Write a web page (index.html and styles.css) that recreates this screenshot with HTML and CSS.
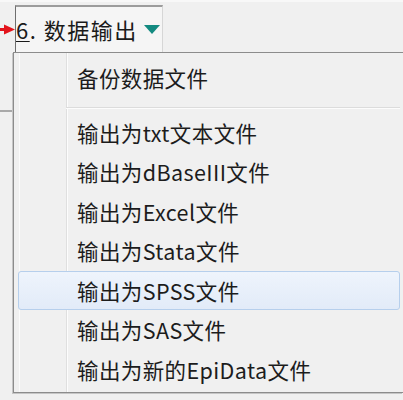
FILE: index.html
```html
<!DOCTYPE html>
<html lang="zh-CN">
<head>
<meta charset="utf-8">
<link rel="stylesheet" href="styles.css">
</head>
<body>
<div class="top">
  <div class="pointer">
    <svg class="arrow" width="15" height="11" viewBox="0 0 15 11"><path d="M0 4 L4 4 L4 0.5 L15 5.5 L4 10.5 L4 7 L0 7 Z" fill="#e2141c"/></svg>
  </div>
  <div class="dropbtn">
    <span class="btn-label"><u>6</u>. 数据输出</span>
    <svg class="caret" width="16" height="9" viewBox="0 0 16 9"><path d="M0 0 L16 0 L8 9 Z" fill="#138a80"/></svg>
  </div>
  <div class="top-rest"></div>
</div>
<div class="lower">
  <div class="side">
    <div class="side-line"></div>
  </div>
  <div class="menu">
    <div class="item">备份数据文件</div>
    <div class="sep"></div>
    <div class="item">输出为txt文本文件</div>
    <div class="item">输出为dBaseIII文件</div>
    <div class="item">输出为Excel文件</div>
    <div class="item">输出为Stata文件</div>
    <div class="item active">输出为SPSS文件</div>
    <div class="item">输出为SAS文件</div>
    <div class="item">输出为新的EpiData文件</div>
  </div>
</div>
</body>
</html>
```
FILE: styles.css
```css
html, body {
  margin: 0;
  padding: 0;
}
body {
  width: 403px;
  height: 400px;
  overflow: hidden;
  background: #f0f0f0;
  font-family: "Noto Sans CJK SC", "Noto Sans", sans-serif;
  color: #1e1e1e;
}
.top {
  display: flex;
  height: 52px;
  border-top: 2px solid #f8f8f8;
  box-sizing: border-box;
}
.pointer {
  width: 15px;
  padding-top: 22px;
  box-sizing: border-box;
}
.arrow {
  display: block;
}
.dropbtn {
  width: 148px;
  margin-top: 3px;
  box-sizing: border-box;
  border-top: 2px solid #9c9c9c;
  border-left: 1px solid #6e6e6e;
  border-right: 1px solid #d6d6d6;
  background: #f5f5f5;
  display: flex;
  align-items: center;
  padding-left: 0;
  padding-bottom: 2px;
}
.btn-label {
  font-size: 22px;
  letter-spacing: 1.5px;
  line-height: 30px;
  color: #1a1a1a;
}
.btn-label u {
  text-decoration-thickness: 1px;
  text-underline-offset: 2px;
}
.caret {
  margin-left: 6px;
  margin-top: 1px;
}
.top-rest {
  flex: 1;
}
.lower {
  display: flex;
  height: 341px;
}
.side {
  width: 15px;
  padding-top: 58px;
  box-sizing: border-box;
}
.side-line {
  height: 2px;
  background: #a9a9a9;
}
.menu {
  width: 390px;
  flex: none;
  box-sizing: border-box;
  border: 1px solid #8c8c8c;
  border-right: none;
  padding: 5px 3px 3px 4px;
  background-color: #f0f0f0;
  background-image: linear-gradient(to right,
    transparent 5px, #fbfbfb 5px, #fbfbfb 6px, transparent 6px,
    transparent 52px, #dfdfdf 52px, #dfdfdf 53px, #fcfcfc 53px, #fcfcfc 54px, transparent 54px);
  box-shadow: -1px 1px 0 #c6c6c6;
}
.item {
  height: 39.5px;
  line-height: 37.5px;
  padding-left: 58px;
  font-size: 21.5px;
  letter-spacing: 0.4px;
  box-sizing: border-box;
  border: 1px solid transparent;
  border-radius: 3px;
  white-space: nowrap;
  color: #1c1c1c;
}
.item.active {
  background: linear-gradient(#eef4fc, #e2ebf8);
  border-color: #b6cfec;
}
.sep {
  margin: 9px 0 4px 48px;
  height: 1px;
  border-bottom: 1px solid #fcfcfc;
  background: #dcdcdc;
}
```
